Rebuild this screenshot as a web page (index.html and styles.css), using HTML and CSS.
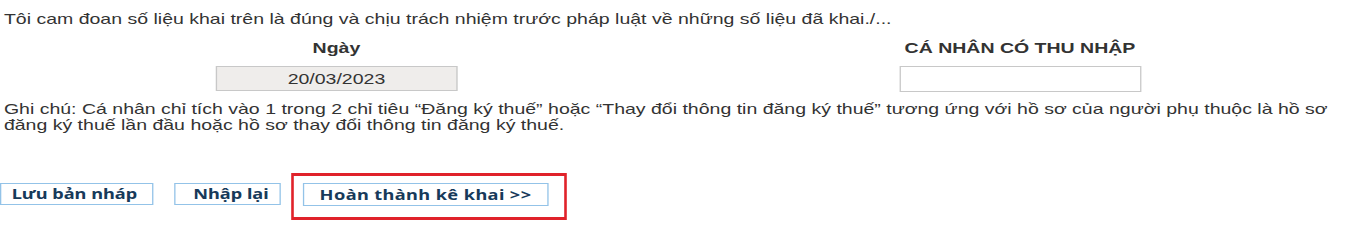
FILE: index.html
```html
<!DOCTYPE html>
<html lang="vi">
<head>
<meta charset="utf-8">
<title>Cam đoan</title>
<link rel="stylesheet" href="styles.css">
</head>
<body>
<div class="page">
  <p class="pledge">Tôi cam đoan số liệu khai trên là đúng và chịu trách nhiệm trước pháp luật về những số liệu đã khai./...</p>
  <div class="sign-grid">
    <div class="sign-col">
      <div class="sign-label">Ngày</div>
      <div class="field field-date">20/03/2023</div>
    </div>
    <div class="sign-col">
      <div class="sign-label">CÁ NHÂN CÓ THU NHẬP</div>
      <div class="field field-person"></div>
    </div>
  </div>
  <p class="note">Ghi chú: Cá nhân chỉ tích vào 1 trong 2 chỉ tiêu “Đăng ký thuế” hoặc “Thay đổi thông tin đăng ký thuế” tương ứng với hồ sơ của người phụ thuộc là hồ sơ đăng ký thuế lần đầu hoặc hồ sơ thay đổi thông tin đăng ký thuế.</p>
  <div class="actions">
    <button class="btn btn-first" type="button">Lưu bản nháp</button>
    <button class="btn btn-reset" type="button">Nhập lại</button>
    <div class="highlight">
      <button class="btn btn-finish" type="button">Hoàn thành kê khai &gt;&gt;</button>
    </div>
  </div>
</div>
</body>
</html>
```
FILE: styles.css
```css
html, body {
  margin: 0;
  padding: 0;
  background: #ffffff;
  overflow: hidden;
}

.page {
  width: 1054px;
  padding-top: 10px;
  transform: scaleX(1.3);
  transform-origin: 0 0;
  font-family: "Liberation Sans", Arial, sans-serif;
  font-size: 15px;
  color: #333333;
}

.pledge {
  margin: 0;
  padding-left: 3px;
  line-height: 17px;
}

.sign-grid {
  display: grid;
  grid-template-columns: 517.6px 534px;
  margin-top: 12px;
}

.sign-col {
  display: flex;
  flex-direction: column;
  align-items: center;
}

.sign-label {
  font-weight: bold;
  line-height: 17px;
}

.field {
  box-sizing: border-box;
  width: 185.5px;
  height: 25px;
  margin-top: 10px;
  border: 1px solid #c8c8c8;
  text-align: center;
  line-height: 23px;
  background: #ffffff;
}

.field-date {
  background: #efedeb;
}

.field-person {
  width: 186px;
  height: 26px;
}

.note {
  margin: 9px 0 0;
  padding-left: 3px;
  line-height: 16px;
}

.actions {
  display: flex;
  align-items: flex-start;
  margin-top: 40px;
}

.btn {
  box-sizing: border-box;
  height: 22px;
  margin: 10px 0 0;
  padding: 0 8px 0 13.5px;
  border: 1px solid #93c3e8;
  background: #ffffff;
  color: #173a5a;
  font-family: "Noto Sans", "DejaVu Sans", sans-serif;
  font-weight: bold;
  font-size: 14px;
  line-height: 20px;
  cursor: pointer;
}

.btn-first {
  padding-left: 8px;
  padding-right: 11px;
}

.btn-reset {
  margin-left: 16.5px;
}

.highlight {
  margin-left: 8.5px;
  border-style: solid;
  border-color: #e0222a;
  border-width: 3px 2.3px;
  padding: 7px 12.3px 11px 6.9px;
}

.btn-finish {
  width: 188.5px;
  height: 23px;
  margin-top: 0;
  padding: 0;
  letter-spacing: 0.3px;
  text-align: center;
}
```
